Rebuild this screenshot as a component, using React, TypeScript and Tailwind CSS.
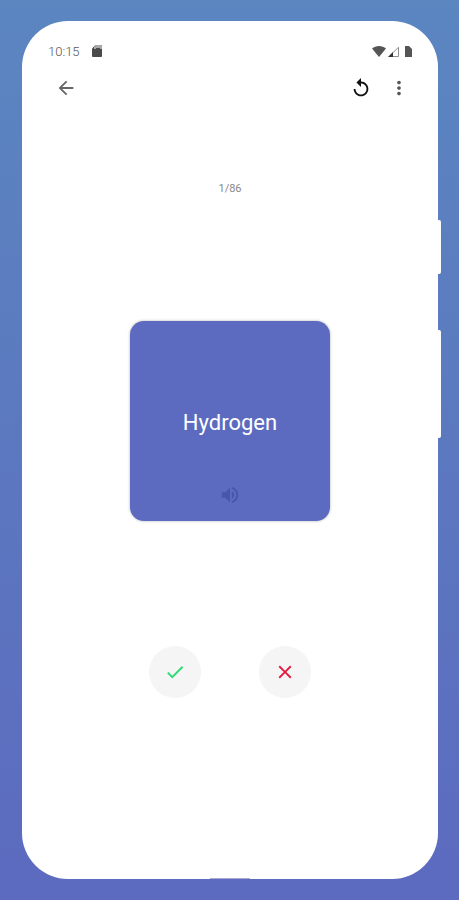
import { useState } from "react";
import {
  MdArrowBack,
  MdCheck,
  MdClose,
  MdMoreVert,
  MdReplay,
  MdVolumeUp,
} from "react-icons/md";

const TOTAL_CARDS = 86;

/** Clock, SD card, wifi, signal and battery. */
function StatusBar() {
  return (
    <div className="flex h-5 items-center justify-between px-[26px]">
      <div className="flex items-center gap-3 text-[13px] font-light text-[#555555]">
        <span className="pt-px leading-5">10:15</span>
        <svg width="10" height="12" viewBox="0 0 10 12" aria-hidden="true">
          <path d="M3.5 0H9a1 1 0 0 1 1 1v10a1 1 0 0 1-1 1H1a1 1 0 0 1-1-1V3.5z" fill="#4a4a4a" />
          <path d="M3.5 0H9a1 1 0 0 1 1 1v3H8V3H4v1H2V2z" fill="#a8a8a8" />
        </svg>
      </div>
      <div className="flex items-center">
        <svg width="14" height="11" viewBox="0 0 14 11" aria-hidden="true">
          <path d="M7 11L0 2.6C1.9 1 4.3 0 7 0s5.1 1 7 2.6z" fill="#555555" />
        </svg>
        <svg className="ml-[2px]" width="11" height="11" viewBox="0 0 11 11" aria-hidden="true">
          <path d="M1.2 10.5H10.5V1.2z" fill="none" stroke="#8c8c8c" />
          <path d="M0 11L5 6v5z" fill="#333333" />
        </svg>
        <svg className="ml-[6px]" width="7" height="11" viewBox="0 0 7 11" aria-hidden="true">
          <path d="M0 0h4l3 3v8H0z" fill="#555555" />
        </svg>
      </div>
    </div>
  );
}

function Toolbar({ onRestart }: { onRestart: () => void }) {
  return (
    <header className="mt-3 flex items-center pl-[29px] pr-6">
      <button type="button" aria-label="Back" className="grid size-[30px] place-items-center text-[#666666]">
        <MdArrowBack size={22} />
      </button>
      <button
        type="button"
        aria-label="Restart"
        onClick={onRestart}
        className="ml-auto grid size-[30px] place-items-center text-[#111111]"
      >
        <MdReplay size={22} />
      </button>
      <button
        type="button"
        aria-label="More options"
        className="ml-2 grid size-[30px] place-items-center text-[#555555]"
      >
        <MdMoreVert size={22} />
      </button>
    </header>
  );
}

export default function App() {
  const [index, setIndex] = useState(1);
  const next = () => setIndex((i) => Math.min(i + 1, TOTAL_CARDS));

  return (
    <div className="flex min-h-screen bg-linear-to-b from-[#5b86c0] to-[#5c6abf] py-[21px] pl-[22px] pr-[21px] font-[Roboto,sans-serif]">
      <div className="relative flex flex-1 flex-col rounded-[46px] bg-white pt-5">
        <StatusBar />
        <Toolbar onRestart={() => setIndex(1)} />

        <main className="flex flex-1 flex-col items-center">
          <p className="mt-[78px] text-[11px] leading-4 text-[#888888]">
            {index}/{TOTAL_CARDS}
          </p>

          <section className="relative mt-[124px] grid size-[200px] place-items-center rounded-[14px] bg-[#5c6bc0] shadow-[0_0_3px_rgba(0,0,0,0.3)]">
            <h1 className="pt-[3px] text-[22px] leading-7 text-white">Hydrogen</h1>
            <button
              type="button"
              aria-label="Pronounce"
              className="absolute inset-x-0 bottom-[15px] mx-auto grid size-[22px] place-items-center text-[#4656ab]"
            >
              <MdVolumeUp size={22} />
            </button>
          </section>

          <div className="mt-[125px] flex gap-[58px]">
            <button
              type="button"
              aria-label="I know this"
              onClick={next}
              className="grid size-[52px] place-items-center rounded-full bg-[#f5f5f5] text-[#2edb74]"
            >
              <MdCheck size={22} />
            </button>
            <button
              type="button"
              aria-label="I don't know this"
              onClick={next}
              className="grid size-[52px] place-items-center rounded-full bg-[#f5f5f5] text-[#e0193e]"
            >
              <MdClose size={22} />
            </button>
          </div>
        </main>

        <div className="mx-auto h-px w-10 bg-[#a9a9d6]" />

        {/* hardware keys on the right edge */}
        <div className="absolute -right-[3px] top-[199px] h-[54px] w-1 rounded-r-[2px] bg-white" />
        <div className="absolute -right-[3px] top-[309px] h-[108px] w-1 rounded-r-[2px] bg-white" />
      </div>
    </div>
  );
}
